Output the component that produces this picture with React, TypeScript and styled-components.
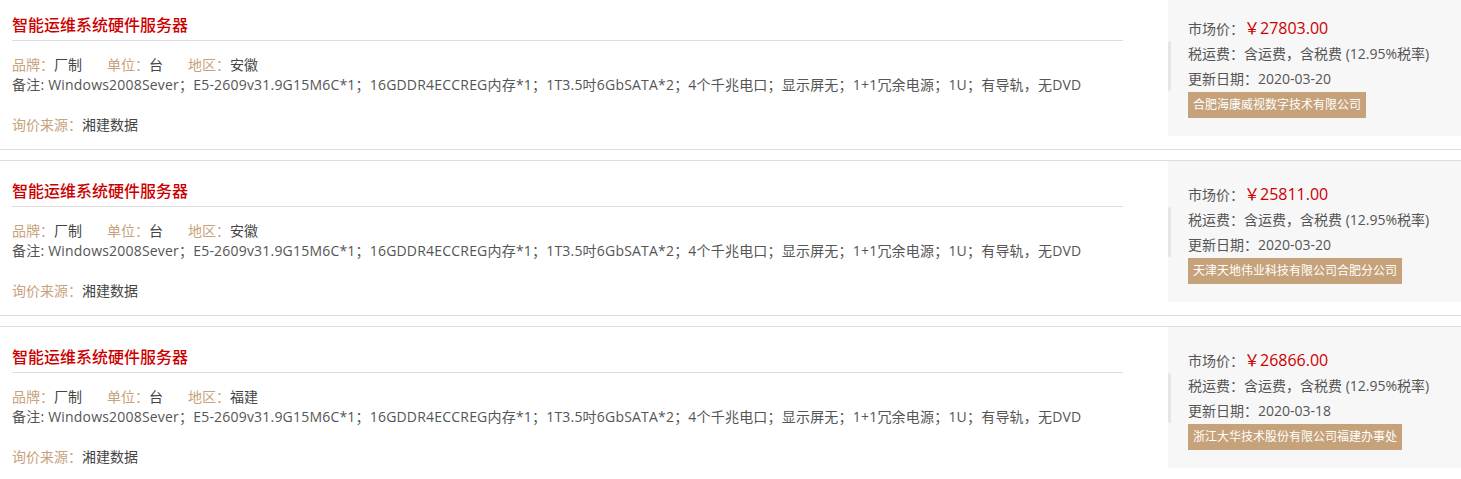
import React from 'react';
import styled, { createGlobalStyle } from 'styled-components';

const GlobalStyle = createGlobalStyle`
    html, body {
        margin: 0;
        padding: 0;
        background: #fff;
        overflow: hidden;
    }
    body {
        font-family: "Open Sans", "Noto Sans CJK SC", sans-serif;
        font-size: 14px;
        color: #444;
    }
`;

const List = styled.div`
    /* page is scrolled a little: first row's top edge sits above the fold */
    margin-top: -6px;
`;

const Item = styled.div`
    display: flex;
    height: 154px;
    border-top: 1px solid #ddd;
    border-bottom: 1px solid #ddd;
    margin-bottom: 10px;
`;

const Main = styled.div`
    width: 1111px;
    margin-left: 12px;
    margin-right: 45px;
`;

const Title = styled.h3`
    margin: 0;
    padding-top: 15px;
    line-height: 30px;
    height: 30px;
    font-size: 16px;
    font-weight: 500;
    color: #cc0000;
    border-bottom: 1px solid #ddd;
`;

const Specs = styled.div`
    margin-top: 14px;
    line-height: 20px;
    font-size: 14px;
`;

const Row = styled.div`
    white-space: nowrap;
`;

const Field = styled.span`
    margin-right: 25px;
`;

const Label = styled.span`
    color: #c8a27c;
`;

const Value = styled.span`
    color: #444;
`;

const Remark = styled.div`
    color: #555;
    letter-spacing: 0.2px;
    white-space: nowrap;
`;

const Source = styled.div`
    margin-top: 20px;
    line-height: 20px;
`;

const Panel = styled.div`
    position: relative;
    flex: 1;
    height: 141px;
    box-sizing: border-box;
    padding: 21px 0 0 20px;
    background: #f7f7f7;
    line-height: 25px;
    color: #555;
`;

const Grip = styled.div`
    position: absolute;
    left: 0;
    top: 46px;
    width: 3px;
    height: 50px;
    border-radius: 2px;
    background: #e6e6e6;
`;

const Price = styled.span`
    color: #cc0000;
    font-size: 16px;
`;

const Line = styled.div`
    white-space: nowrap;
`;

const Supplier = styled.span`
    display: inline-block;
    padding: 0 5px;
    line-height: 26px;
    font-size: 12px;
    color: #fff;
    background: #c6a27b;
    white-space: nowrap;
`;

type Quote = {
    title: string;
    brand: string;
    unit: string;
    region: string;
    remark: string;
    source: string;
    price: string;
    date: string;
    supplier: string;
};

const remark =
    'Windows2008Sever；E5-2609v31.9G15M6C*1；16GDDR4ECCREG内存*1；1T3.5吋6GbSATA*2；4个千兆电口；显示屏无；1+1冗余电源；1U；有导轨，无DVD';

const quotes: Quote[] = [
    {
        title: '智能运维系统硬件服务器',
        brand: '厂制',
        unit: '台',
        region: '安徽',
        remark,
        source: '湘建数据',
        price: '￥27803.00',
        date: '2020-03-20',
        supplier: '合肥海康威视数字技术有限公司',
    },
    {
        title: '智能运维系统硬件服务器',
        brand: '厂制',
        unit: '台',
        region: '安徽',
        remark,
        source: '湘建数据',
        price: '￥25811.00',
        date: '2020-03-20',
        supplier: '天津天地伟业科技有限公司合肥分公司',
    },
    {
        title: '智能运维系统硬件服务器',
        brand: '厂制',
        unit: '台',
        region: '福建',
        remark,
        source: '湘建数据',
        price: '￥26866.00',
        date: '2020-03-18',
        supplier: '浙江大华技术股份有限公司福建办事处',
    },
];

const QuoteItem = ({ q }: { q: Quote }) => (
    <Item>
        <Main>
            <Title>{q.title}</Title>
            <Specs>
                <Row>
                    <Field>
                        <Label>品牌：</Label>
                        <Value>{q.brand}</Value>
                    </Field>
                    <Field>
                        <Label>单位：</Label>
                        <Value>{q.unit}</Value>
                    </Field>
                    <Field>
                        <Label>地区：</Label>
                        <Value>{q.region}</Value>
                    </Field>
                </Row>
                <Remark>备注: {q.remark}</Remark>
            </Specs>
            <Source>
                <Label>询价来源：</Label>
                <Value>{q.source}</Value>
            </Source>
        </Main>
        <Panel>
            <Grip />
            <Line>
                市场价：<Price>{q.price}</Price>
            </Line>
            <Line>税运费：含运费，含税费 (12.95%税率)</Line>
            <Line>更新日期：{q.date}</Line>
            <Supplier>{q.supplier}</Supplier>
        </Panel>
    </Item>
);

export default function App() {
    return (
        <>
            <GlobalStyle />
            <List>
                {quotes.map((q, i) => (
                    <QuoteItem key={i} q={q} />
                ))}
            </List>
        </>
    );
}
